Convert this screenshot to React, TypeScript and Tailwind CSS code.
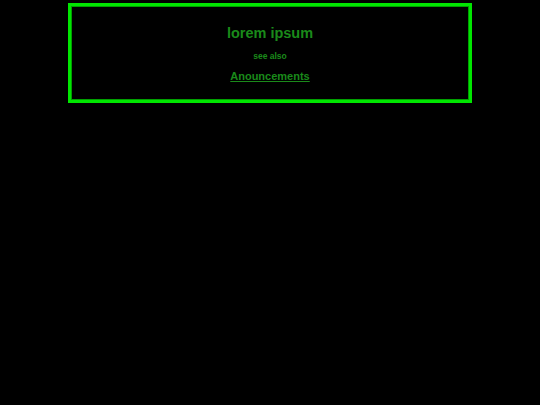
export default function App() {
  return (
    <div className="min-h-[405px] w-full bg-black pt-[3px]" style={{ fontFamily: '"Liberation Sans", Arial, sans-serif' }}>
      <div className="mx-auto flex w-[404px] flex-col items-center border-[3px] border-[#00e600] pt-[17px] pb-[17px] shadow-[inset_0_0_0_1px_#00a000]">
        <h2 className="text-[14.5px] font-bold leading-[20px] text-[#1a8a1a]">lorem ipsum</h2>
        <p className="mt-[7px] text-[8.5px] font-bold leading-[12px] text-[#1a8a1a]">see also</p>
        <a href="#" className="mt-[7px] text-[11px] font-bold leading-[14px] text-[#1a8a1a] underline">Anouncements</a>
      </div>
    </div>
  );
}
